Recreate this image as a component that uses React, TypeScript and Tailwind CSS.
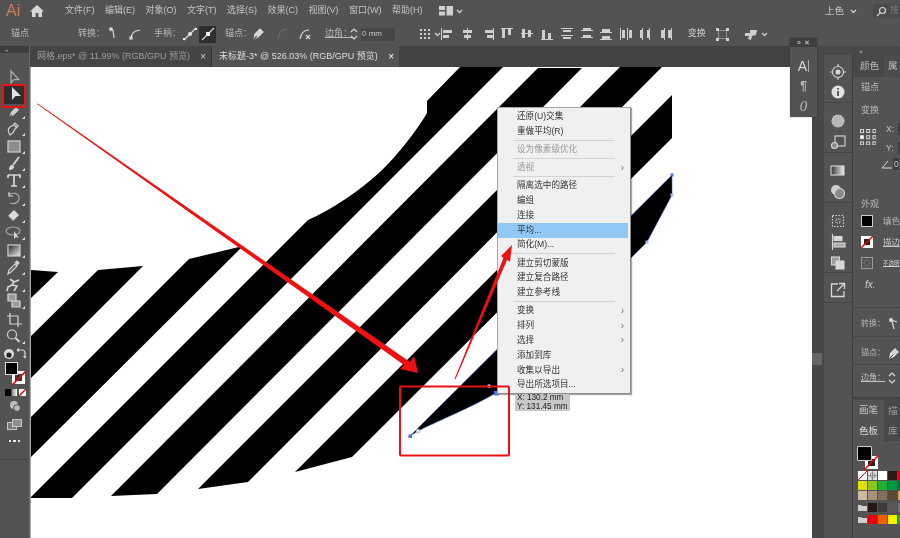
import type { ReactNode } from "react";

const menus = ["文件(F)", "编辑(E)", "对象(O)", "文字(T)", "选择(S)", "效果(C)", "视图(V)", "窗口(W)", "帮助(H)"];

type MenuRow = { label?: string; sub?: boolean; off?: boolean; hot?: boolean; sep?: boolean };

const menuRows: MenuRow[] = [
  { label: "还原(U)交集" },
  { label: "重做平均(R)" },
  { sep: true },
  { label: "设为像素级优化", off: true },
  { sep: true },
  { label: "透视", off: true, sub: true },
  { sep: true },
  { label: "隔离选中的路径" },
  { label: "编组" },
  { label: "连接" },
  { label: "平均...", hot: true },
  { label: "简化(M)..." },
  { sep: true },
  { label: "建立剪切蒙版" },
  { label: "建立复合路径" },
  { label: "建立参考线" },
  { sep: true },
  { label: "变换", sub: true },
  { label: "排列", sub: true },
  { label: "选择", sub: true },
  { label: "添加到库" },
  { label: "收集以导出", sub: true },
  { label: "导出所选项目..." },
];

const swatches = [
  ["none", "reg", "#ffffff", "#2a1a14", "#e60012"],
  ["#e3e000", "#8fc31f", "#22ac38", "#009944", "#006934"],
  ["#cbbc9f", "#a8917b", "#7f6f5c", "#5b4a3a", "#c8a46e"],
  ["folder", "#231815", "#3e3a39", "#595757", "#727171"],
  ["folder", "#e60012", "#eb6100", "#fff100", "#22ac38"],
];

// align icons in the control bar, each a list of x,y,w,h
const alignIcons: number[][][] = [
  [[0, 1, 1, 12], [2, 3, 9, 3], [2, 8, 6, 3]],
  [[6, 1, 1, 12], [2, 3, 9, 3], [3, 8, 7, 3]],
  [[12, 1, 1, 12], [4, 3, 8, 3], [6, 8, 6, 3]],
  [[1, 1, 12, 1], [2, 2, 3, 9], [8, 2, 3, 6]],
  [[1, 6, 12, 1], [2, 2, 3, 9], [8, 3, 3, 7]],
  [[1, 12, 12, 1], [2, 3, 3, 9], [8, 6, 3, 6]],
  [[1, 1, 12, 1], [3, 3, 8, 2], [1, 8, 12, 1], [3, 10, 8, 2]],
  [[1, 3, 12, 1], [3, 1, 8, 2], [1, 10, 12, 1], [3, 8, 8, 2]],
  [[1, 5, 12, 1], [3, 2, 8, 3], [1, 12, 12, 1], [3, 9, 8, 3]],
  [[1, 1, 1, 12], [3, 3, 3, 8], [8, 1, 1, 12], [10, 3, 3, 8]],
  [[3, 1, 1, 12], [1, 3, 2, 8], [10, 1, 1, 12], [8, 3, 2, 8]],
  [[5, 1, 1, 12], [2, 3, 3, 8], [12, 1, 1, 12], [9, 3, 3, 8]],
];

function Tool({ children, corner = true }: { children: ReactNode; corner?: boolean }) {
  return (
    <div className="flex h-[17.3px] w-[30px] shrink-0 items-center justify-center">
      <svg width="24" height="17" viewBox="0 0 24 17" fill="none" stroke="#d6d6d6" strokeWidth="1.2">
        {children}
        {corner && <polygon points="22,13 22,16 19,16" fill="#e0e0e0" stroke="none" />}
      </svg>
    </div>
  );
}

function Tiny({ children, w = 16 }: { children: ReactNode; w?: number }) {
  return (
    <svg width={w} height="16" viewBox={`0 0 ${w} 16`} fill="none" stroke="#d8d8d8" strokeWidth="1.2" className="shrink-0">
      {children}
    </svg>
  );
}

function Chevron() {
  return (
    <svg width="7" height="5" viewBox="0 0 7 5" fill="none" stroke="#cfcfcf" strokeWidth="1.3" className="shrink-0">
      <path d="M1 1l2.5 2.5L6 1" />
    </svg>
  );
}

function MenuBar() {
  return (
    <div className="flex h-[22px] shrink-0 items-center bg-[#535353] text-[#c4c4c4]">
      <span className="ml-[6px] w-[22px] text-[16px] leading-none text-[#cf7d55]">Ai</span>
      <svg width="16" height="14" viewBox="0 0 16 14" fill="#d8d8d8" className="ml-[1px]">
        <path d="M8 1L1 7.5h2V13h3.6V9h2.8v4H13V7.5h2z" />
      </svg>
      <div className="ml-[20px] flex gap-[10.5px] text-[9px]">
        {menus.map((m) => (
          <span key={m} className="whitespace-nowrap">{m}</span>
        ))}
      </div>
      <svg width="14" height="10" viewBox="0 0 14 10" fill="#d0d0d0" className="ml-[16px]">
        <rect x="0" y="0" width="6" height="4" />
        <rect x="0" y="5.5" width="6" height="4" />
        <rect x="7.5" y="0" width="6.5" height="9.5" />
      </svg>
      <span className="ml-[3px]"><Chevron /></span>
      <span className="ml-auto whitespace-nowrap text-[9.5px]">上色</span>
      <span className="ml-[6px]"><Chevron /></span>
      <div className="ml-[16px] flex h-[14px] w-[27px] items-center gap-[3px] bg-[#4b4b4b] pl-[3px]">
        <svg width="11" height="11" viewBox="0 0 11 11" fill="none" stroke="#d4d4d4" strokeWidth="1.2" className="shrink-0">
          <circle cx="6.5" cy="4.5" r="3" />
          <path d="M4.3 6.8L1 10" />
        </svg>
        <span className="text-[9px] whitespace-nowrap text-[#777]">搜</span>
      </div>
    </div>
  );
}

function ControlBar() {
  return (
    <div className="flex h-[24px] shrink-0 items-center whitespace-nowrap bg-[#535353] text-[9px] text-[#b8b8b8]">
      <span className="ml-[11px] w-[67px]">锚点</span>
      <span className="w-[29px]">转换：</span>
      <Tiny>
        <path d="M3 2l3 2 1 8M5 2.5L3 5" />
        <circle cx="4" cy="3" r="1.8" fill="#d8d8d8" stroke="none" />
      </Tiny>
      <span className="w-[4px]" />
      <Tiny>
        <path d="M4 13c0-6 3-8 9-9" />
        <rect x="3" y="11" width="2" height="2" fill="#d8d8d8" />
      </Tiny>
      <span className="ml-[11px] w-[28px]">手柄：</span>
      <Tiny>
        <path d="M2 14L14 2" />
        <circle cx="8" cy="8" r="2" fill="#e8e8e8" stroke="none" />
        <rect x="1" y="12" width="2" height="2" fill="#e8e8e8" stroke="none" />
        <rect x="13" y="2" width="2" height="2" fill="#e8e8e8" stroke="none" />
      </Tiny>
      <span className="ml-[1px] flex h-[17px] w-[17px] items-center justify-center bg-[#2e2e2e]">
        <Tiny>
          <path d="M2 14L14 2" />
          <rect x="6" y="6" width="4" height="4" fill="#f0f0f0" stroke="none" />
        </Tiny>
      </span>
      <span className="ml-[9px] w-[25px]">锚点：</span>
      <Tiny>
        <path d="M4 13l1-5 5-5 3 3-5 5z" fill="#d8d8d8" />
        <path d="M3 14l4-4" stroke="#535353" />
      </Tiny>
      <span className="w-[9px]" />
      <Tiny>
        <path d="M3 13c0-5 3-9 9-10" stroke="#6c6c6c" />
      </Tiny>
      <span className="w-[6px]" />
      <Tiny>
        <path d="M3 13c1-6 4-9 9-9M9 9l4 4M13 9l-4 4" />
      </Tiny>
      <span className="ml-[12px] w-[25px] underline">边角：</span>
      <svg width="8" height="14" viewBox="0 0 8 14" fill="none" stroke="#d8d8d8" strokeWidth="1.2" className="shrink-0">
        <path d="M1 5l3-3 3 3M1 9l3 3 3-3" />
      </svg>
      <div className="ml-[3px] flex h-[13px] w-[34px] items-center bg-[#474747] pl-[1px] text-[8px] text-[#c8c8c8]">0 mm</div>
      <span className="ml-[24px]">
        <svg width="14" height="12" viewBox="0 0 14 12" fill="#d0d0d0">
          {[0, 4, 8].map((y) =>
            [0, 4, 8].map((x) => <rect key={`${x}${y}`} x={x + 1} y={y + 1} width="2" height="2" />)
          )}
        </svg>
      </span>
      <span className="ml-[1px]"><Chevron /></span>
      <div className="flex gap-[5.8px]">
        {alignIcons.map((rects, i) => (
          <svg key={i} width="14" height="14" viewBox="0 0 14 14" fill="#cfcfcf" className="shrink-0">
            {rects.map((r, j) => (
              <rect key={j} x={r[0]} y={r[1]} width={r[2]} height={r[3]} />
            ))}
          </svg>
        ))}
      </div>
      <span className="ml-[15px] w-[28px] text-[#cfcfcf]">变换</span>
      <svg width="13" height="13" viewBox="0 0 13 13" fill="none" stroke="#d0d0d0" strokeWidth="1" className="shrink-0">
        <rect x="2.5" y="2.5" width="8" height="8" strokeDasharray="1 1" />
        <path d="M0 0h3v3H0zM10 0h3v3h-3zM0 10h3v3H0zM10 10h3v3h-3z" fill="#d0d0d0" stroke="none" />
      </svg>
      <span className="ml-[15px]">
        <svg width="14" height="13" viewBox="0 0 14 13" fill="#cfcfcf">
          <path d="M1 5h5V2l7 0-1 5-4 1-1 4-3-1 1-3H1z" />
        </svg>
      </span>
      <span className="ml-[3px]"><Chevron /></span>
    </div>
  );
}

function LeftToolbar() {
  return (
    <div className="flex w-[30px] shrink-0 flex-col items-center border-r border-[#6a6a6a] bg-[#535353]">
      <div className="flex h-[7px] w-full items-center bg-[#3d3d3d] pl-[5px] text-[6px] leading-none text-[#aaa]">»</div>
      <div className="h-[15.4px] w-full shrink-0" />
      <Tool corner={false}>
        <path d="M8 2v12l3-3.4h5z" stroke="#b0b0b0" />
      </Tool>
      <div className="flex h-[17.3px] w-[30px] shrink-0 items-center justify-center">
        <div className="flex h-[19px] w-[22px] items-center justify-center bg-[#2f2f2f]">
          <svg width="16" height="16" viewBox="0 0 16 16" fill="#e4e4e4">
            <path d="M5 1v13l3.5-4H14z" />
          </svg>
        </div>
      </div>
      <Tool>
        <path d="M6 15l2-6 5-5 3 3-5 5z" fill="#cfcfcf" stroke="none" />
        <path d="M6 15l3-3" stroke="#535353" />
      </Tool>
      <Tool>
        <path d="M7 15c-3-4-2-8 2-9l3-3 3 3-3 3c-1 3-3 5-5 6z" />
        <path d="M11 5l3 3" />
      </Tool>
      <Tool>
        <rect x="5" y="3" width="12" height="11" fill="#8c8c8c" stroke="#cfcfcf" />
      </Tool>
      <Tool>
        <path d="M16 2l-6 8" strokeWidth="1.8" />
        <path d="M6 15c0-3 1-5 3-5l2 1c0 3-2 4-5 4z" fill="#d6d6d6" stroke="none" />
      </Tool>
      <Tool>
        <path d="M5 3h12v3M5 3v3M11 3v11M8 14h6" strokeWidth="1.7" />
      </Tool>
      <Tool>
        <path d="M6 5c3-3 9-2 10 2 1 5-5 8-9 6" stroke="#a6a6a6" />
        <path d="M6 2v4h4" stroke="#d6d6d6" />
      </Tool>
      <Tool>
        <path d="M5 9l6-6 5 5-6 6z" fill="#dcdcdc" stroke="none" />
        <path d="M5 9l5 5" stroke="#777" />
      </Tool>
      <Tool>
        <ellipse cx="10" cy="7" rx="7" ry="4" stroke="#a8a8a8" />
        <path d="M11 7v8l2-2 3 1z" fill="#d6d6d6" stroke="none" />
      </Tool>
      <Tool>
        <defs>
          <linearGradient id="tool-grad" x1="0" x2="1" y1="0" y2="1">
            <stop offset="0" stopColor="#222" />
            <stop offset="1" stopColor="#eee" />
          </linearGradient>
        </defs>
        <rect x="5" y="3" width="12" height="11" fill="url(#tool-grad)" stroke="#cfcfcf" />
      </Tool>
      <Tool>
        <path d="M5 15l1-4 6-6 2 2-6 6z" />
        <path d="M12 4l2-2 2 2-2 2" fill="#d6d6d6" />
      </Tool>
      <Tool>
        <path d="M7 3l4 3-2 3 5 1-3 5M9 9l-4 2-1 4M11 6l5-2" strokeWidth="1.6" />
      </Tool>
      <Tool>
        <path d="M5 1h8v7H5zM9 8h8v6H9z" fill="#9a9a9a" />
      </Tool>
      <Tool corner={false}>
        <path d="M7 2v11h12M4 5h11v11" />
      </Tool>
      <Tool>
        <circle cx="9" cy="6.5" r="4.5" />
        <path d="M12.5 10l4 4" strokeWidth="1.8" />
      </Tool>
      <div className="flex h-[17px] w-full shrink-0 items-center justify-between px-[3px]">
        <svg width="12" height="12" viewBox="0 0 12 12">
          <circle cx="6" cy="6" r="5" fill="#dcdcdc" />
          <circle cx="6" cy="7" r="2.6" fill="#222" />
        </svg>
        <svg width="10" height="12" viewBox="0 0 10 12" fill="none" stroke="#d6d6d6" strokeWidth="1.2">
          <path d="M1 2h5c2 0 3 1 3 3v5M1 2l2-1.5M1 2l2 1.5M9 10l-1.5-2M9 10l1-2" />
        </svg>
      </div>
      <div className="relative h-[23px] w-full shrink-0">
        <div className="absolute left-[12px] top-[9px] h-[13px] w-[13px] border-2 border-white bg-white">
          <div className="mx-auto mt-[1px] h-[7px] w-[7px] bg-[#3a3a3a]" />
        </div>
        <div className="absolute left-[5px] top-0 h-[13px] w-[13px] border border-[#ddd] bg-black" />
        <svg className="absolute left-[11px] top-[9px]" width="15" height="14" viewBox="0 0 15 14">
          <path d="M1 14L15 0" stroke="#ee0000" strokeWidth="1.6" />
        </svg>
      </div>
      <div className="mt-[3px] flex h-[8px] w-full items-center gap-[1px] pl-[5px]">
        <span className="h-[7px] w-[6px] bg-black" />
        <span className="h-[7px] w-[5px] bg-gradient-to-r from-[#888] to-white" />
        <svg width="7" height="7" viewBox="0 0 7 7" className="ml-[1px] bg-white">
          <path d="M0 7L7 0" stroke="#ee0000" strokeWidth="1.4" />
        </svg>
      </div>
      <div className="mt-[3px] flex h-[14px] items-center">
        <svg width="12" height="12" viewBox="0 0 12 12" fill="#bdbdbd">
          <circle cx="5" cy="5" r="4" />
          <circle cx="8" cy="8" r="3.4" stroke="#535353" />
        </svg>
      </div>
      <div className="mt-[4px] flex h-[14px] items-center">
        <svg width="15" height="11" viewBox="0 0 15 11" fill="none" stroke="#c8c8c8">
          <rect x="0.5" y="3.5" width="9" height="7" fill="#7a7a7a" />
          <rect x="5.5" y="0.5" width="9" height="7" fill="#8f8f8f" />
        </svg>
      </div>
      <div className="mt-[3px] flex h-[14px] items-center gap-[2px]">
        <span className="h-[2.5px] w-[2.5px] bg-[#e8e8e8]" />
        <span className="h-[2.5px] w-[2.5px] bg-[#e8e8e8]" />
        <span className="h-[2.5px] w-[2.5px] bg-[#e8e8e8]" />
      </div>
      <div className="mt-[11px] w-full border-t border-[#444]" />
    </div>
  );
}

function TabBar() {
  return (
    <div className="flex h-[21px] shrink-0 items-stretch bg-[#424242] text-[9px] whitespace-nowrap">
      <div className="flex w-[182px] items-center justify-between border-r border-[#383838] bg-[#454545] pl-[7px] pr-[5px] text-[#9c9c9c]">
        <span>网格.eps* @ 11.99% (RGB/GPU 预览)</span>
        <span className="text-[10px] text-[#cfcfcf]">×</span>
      </div>
      <div className="flex w-[187px] items-center justify-between bg-[#535353] pl-[7px] pr-[5px] text-[#dedede]">
        <span>未标题-3* @ 526.03% (RGB/GPU 预览)</span>
        <span className="text-[10px] text-white">×</span>
      </div>
    </div>
  );
}

function ContextMenu() {
  return (
    <div className="absolute left-[466px] top-[40px] flex w-[134px] flex-col border border-[#a8a8a8] border-r-[#8c8c8c] border-b-[#8c8c8c] bg-[#f0f0f0] py-[1px] text-[8.6px] text-[#333] shadow-[1px_1px_1px_rgba(0,0,0,0.35)]">
      {menuRows.map((r, i) =>
        r.sep ? (
          <div key={i} className="mx-[15px] my-[1.2px] border-t border-[#d4d4d4]" />
        ) : (
          <div
            key={i}
            className={`flex h-[14.8px] items-center justify-between pl-[19px] pr-[3px] ${r.hot ? "mr-[2px] bg-[#90c8f6]" : ""} ${r.off ? "text-[#9a9a9a]" : ""}`}
          >
            <span>{r.label}</span>
            {r.sub && <span className="mr-[3px] text-[10px] leading-none text-[#777]">›</span>}
          </div>
        )
      )}
    </div>
  );
}

function Artboard() {
  return (
    <div className="relative min-h-0 flex-1 overflow-hidden border-l border-[#a8a8a8] bg-white">
      <svg className="absolute left-0 top-0" width="781" height="471" viewBox="31 67 781 471">
        <g fill="#000">
          <path d="M460 67H503L72 498H30L308 220C335 208 360 190 380 172C398 155 417 130 427 113V101Z" />
          <polygon points="538,68 582,68 157,494 111,496" />
          <polygon points="620,67 662,67 248,482 198,489" />
          <polygon points="672,95 672,138 352,457 295,472" />
          <polygon points="243,246 30,458 30,418 189,259" />
          <polygon points="143,266 30,379 30,337 98,270" />
          <polygon points="30,270 58,272 30,299" />
          <path d="M672 175V195L647 242 632 257 496 393C470 408 440 420 418 431L410 436Z" stroke="#3a5fc8" strokeWidth="0.6" />
        </g>
        <g fill="#4a74e8">
          <rect x="670.5" y="173.5" width="3" height="3" />
          <rect x="670.5" y="193.5" width="3" height="3" fill="#9db6ee" />
          <rect x="645.5" y="240.5" width="3" height="3" fill="#9db6ee" />
          <rect x="494" y="391" width="4.5" height="4.5" />
          <rect x="408.5" y="434.5" width="3.5" height="3.5" />
        </g>
        <circle cx="489" cy="386" r="1.6" fill="#fff" stroke="#8aa4e8" strokeWidth="0.6" />
        <circle cx="418" cy="431" r="2" fill="#d8e4f8" stroke="#8aa4a8" strokeWidth="0.6" />
      </svg>
      <ContextMenu />
      <div className="absolute left-[484px] top-[327px] rounded-[1px] bg-[#c8c8c8] px-[2px] text-[8.2px] leading-[8.5px] text-[#222] whitespace-nowrap">
        <div>X: 130.2 mm</div>
        <div>Y: 131.45 mm</div>
      </div>
      <svg className="absolute left-0 top-0" width="781" height="471" viewBox="31 67 781 471" fill="#f01010">
        <polygon points="37,104 37.6,103.4 410,362 414,356 418,373 400,369 404,365" />
        <polygon points="454.5,379 455.5,379.3 507,260 510,261.5 512,245 501,256 503.5,258" />
        <rect x="400" y="386.5" width="109" height="69" rx="1" fill="none" stroke="#ee1111" strokeWidth="2" />
      </svg>
    </div>
  );
}

function DockIcon({ children, h = 20 }: { children: ReactNode; h?: number }) {
  return (
    <div className="flex w-full shrink-0 items-center justify-center" style={{ height: h }}>
      <svg width="16" height="16" viewBox="0 0 16 16" fill="none" stroke="#d8d8d8" strokeWidth="1.1">
        {children}
      </svg>
    </div>
  );
}

function IconColumn() {
  return (
    <div className="flex w-[29px] shrink-0 flex-col border-r border-[#3f3f3f] bg-[#535353]">
      <div className="flex h-[48px] shrink-0 flex-col border-b border-[#444] pt-[7px]">
        <DockIcon>
          <circle cx="8" cy="8" r="5.5" />
          <circle cx="8" cy="8" r="2" fill="#d8d8d8" />
          <path d="M8 0v3M8 13v3M0 8h3M13 8h3" />
        </DockIcon>
        <DockIcon>
          <circle cx="8" cy="8" r="6.5" fill="#e2e2e2" stroke="none" />
          <path d="M8 4v1.5M8 7v5" stroke="#333" strokeWidth="1.5" />
        </DockIcon>
      </div>
      <div className="flex h-[50px] shrink-0 flex-col gap-[1px] border-b border-[#444] pt-[8px]">
        <DockIcon>
          <circle cx="8" cy="8" r="6" fill="#b8b8b8" strokeDasharray="1.5 1" />
        </DockIcon>
        <DockIcon>
          <rect x="5" y="2" width="10" height="10" />
          <circle cx="4.5" cy="11.5" r="3" fill="#8a8a8a" />
        </DockIcon>
      </div>
      <div className="flex h-[50px] shrink-0 flex-col gap-[1px] border-b border-[#444] pt-[8px]">
        <DockIcon>
          <defs>
            <linearGradient id="dock-grad" x1="0" x2="1">
              <stop offset="0" stopColor="#333" />
              <stop offset="1" stopColor="#eee" />
            </linearGradient>
          </defs>
          <rect x="1" y="3" width="13" height="9" fill="url(#dock-grad)" />
        </DockIcon>
        <DockIcon>
          <circle cx="6" cy="6" r="5" fill="#cfcfcf" stroke="none" />
          <circle cx="9.5" cy="9.5" r="5" fill="#8a8a8a" />
        </DockIcon>
      </div>
      <div className="flex h-[70px] shrink-0 flex-col gap-[1px] border-b border-[#444] pt-[8px]">
        <DockIcon>
          <rect x="2.5" y="2.5" width="11" height="11" strokeDasharray="1.5 1.5" />
          <rect x="6" y="6" width="4" height="4" strokeDasharray="1 1" />
        </DockIcon>
        <DockIcon>
          <path d="M2.5 0v16" />
          <rect x="4" y="2.5" width="8" height="4" fill="#d8d8d8" />
          <rect x="4" y="9" width="11" height="4" fill="#a8a8a8" />
        </DockIcon>
        <DockIcon>
          <rect x="1.5" y="2" width="8" height="8" fill="#9a9a9a" />
          <rect x="6" y="6" width="8" height="8" fill="#d8d8d8" />
        </DockIcon>
      </div>
      <div className="flex h-[30px] shrink-0 border-b border-[#444] pt-[7px]">
        <DockIcon>
          <path d="M8 2H1.5v12.5H14V9" strokeWidth="1.3" />
          <path d="M7 9l7-7M9 1.5h5.5V7" strokeWidth="1.3" />
        </DockIcon>
      </div>
    </div>
  );
}

function PanelLabel({ children, className = "" }: { children: ReactNode; className?: string }) {
  return <div className={`flex shrink-0 items-center whitespace-nowrap pl-[8px] text-[9px] text-[#b8b8b8] ${className}`}>{children}</div>;
}

function PropertiesPanel() {
  return (
    <div className="flex w-[47px] shrink-0 flex-col bg-[#535353]">
      <div className="flex h-[22px] shrink-0 text-[9.5px] text-[#bdbdbd] whitespace-nowrap">
        <div className="flex w-[30px] items-center justify-center bg-[#484848] pl-[3px]">颜色</div>
        <div className="flex flex-1 items-center border-l border-[#454545] bg-[#4c4c4c] pl-[4px]">属</div>
      </div>
      <PanelLabel className="h-[20px] pt-[2px]">锚点</PanelLabel>
      <PanelLabel className="mt-[3px] h-[20px] pt-[2px]">变换</PanelLabel>
      <div className="flex h-[36px] shrink-0 items-center pl-[7px]">
        <svg width="16" height="16" viewBox="0 0 16 16" fill="#d8d8d8" className="mb-[3px] shrink-0">
          {[0, 1, 2].map((r) =>
            [0, 1, 2].map((c) => (
              <rect
                key={`${r}${c}`}
                x={c * 6.2 + 0.5}
                y={r * 6.2 + 0.5}
                width="3"
                height="3"
                fill={r === 1 && c === 0 ? "#fff" : "none"}
                stroke="#d8d8d8"
              />
            ))
          )}
        </svg>
        <div className="ml-[10px] flex flex-col gap-[7px] text-[8.5px] leading-[12px] text-[#c4c4c4]">
          <span className="flex items-center whitespace-nowrap">X:<i className="ml-[4px] h-[12px] w-[6px] bg-[#3d3d3d]" /></span>
          <span className="flex items-center whitespace-nowrap">Y:<i className="ml-[4px] h-[12px] w-[6px] bg-[#3d3d3d]" /></span>
        </div>
      </div>
      <div className="flex h-[16px] shrink-0 items-center justify-end gap-[1px] pr-[1px] text-[8.5px] text-[#c4c4c4]">
        <svg width="11" height="9" viewBox="0 0 11 9" fill="none" stroke="#d8d8d8">
          <path d="M1 8h10M1 8l6-7" />
        </svg>
        <span className="w-[6px] bg-[#3d3d3d] pl-[1px] leading-[12px]">0</span>
      </div>
      <PanelLabel className="mt-[24px] h-[16px] pt-[1px]">外观</PanelLabel>
      <div className="flex h-[18px] shrink-0 items-center gap-[10px] pl-[8px] text-[8.5px] text-[#b8b8b8] whitespace-nowrap">
        <span className="h-[12px] w-[12px] shrink-0 border border-[#cfcfcf] bg-black" />
        填色
      </div>
      <div className="mt-[3px] flex h-[18px] shrink-0 items-center gap-[10px] pl-[8px] text-[8.5px] text-[#c8c8c8] whitespace-nowrap">
        <svg width="12" height="12" viewBox="0 0 12 12" className="shrink-0 bg-white">
          <rect x="3" y="3" width="6" height="6" fill="#222" />
          <path d="M0 12L12 0" stroke="#ee0000" strokeWidth="1.5" />
        </svg>
        <span className="underline">描边</span>
      </div>
      <div className="mt-[3px] flex h-[18px] shrink-0 items-center gap-[10px] pl-[8px] text-[5.5px] text-[#d4d4d4] whitespace-nowrap">
        <svg width="12" height="12" viewBox="0 0 12 12" fill="none" stroke="#9a9a9a" className="shrink-0">
          <rect x="0.5" y="0.5" width="11" height="11" />
          <circle cx="6" cy="6" r="3" strokeDasharray="1 1" />
        </svg>
        <span className="underline">不透明</span>
      </div>
      <PanelLabel className="mt-[3px] h-[18px] italic">
        <span className="pl-[4px] text-[10px] text-[#cfcfcf]">fx.</span>
      </PanelLabel>
      <div className="mt-[14px] shrink-0 border-t border-[#474747]" />
      <div className="flex h-[29px] shrink-0 items-center gap-[3px] border-b border-[#474747] pl-[8px] pt-[4px] text-[8px] text-[#b8b8b8] whitespace-nowrap">
        转换：
        <svg width="12" height="14" viewBox="0 0 12 14" fill="none" stroke="#d8d8d8" strokeWidth="1.2" className="shrink-0">
          <circle cx="3" cy="3" r="2" fill="#d8d8d8" stroke="none" />
          <path d="M3 3l6 2M4 4l2 8" />
        </svg>
      </div>
      <div className="flex h-[28px] shrink-0 items-center gap-[3px] border-b border-[#474747] pl-[8px] pt-[4px] text-[8px] text-[#b8b8b8] whitespace-nowrap">
        锚点：
        <svg width="12" height="14" viewBox="0 0 12 14" fill="#d8d8d8" className="shrink-0">
          <path d="M1 13l1-6 5-5 4 4-5 5z" />
          <path d="M1 13l4-4" stroke="#535353" />
        </svg>
      </div>
      <div className="flex h-[32px] shrink-0 items-center gap-[3px] pb-[6px] pl-[8px] text-[8px] text-[#c4c4c4] whitespace-nowrap">
        <span className="underline">边角：</span>
        <svg width="8" height="14" viewBox="0 0 8 14" fill="none" stroke="#d8d8d8" strokeWidth="1.2" className="shrink-0">
          <path d="M1 5l3-3 3 3M1 9l3 3 3-3" />
        </svg>
      </div>
      <div className="shrink-0 border-t border-[#3d3d3d]" />
      <div className="flex h-[21px] shrink-0 bg-[#484848] pt-[2px] text-[9.5px] text-[#c8c8c8]">
        <div className="flex w-[31px] items-center justify-center bg-[#535353] pt-[1px]">画笔</div>
        <div className="pl-[4px] leading-[21px] text-[#9a9a9a]">描</div>
      </div>
      <div className="flex h-[22px] shrink-0 bg-[#484848] text-[9.5px] text-[#dcdcdc]">
        <div className="flex w-[31px] items-center justify-center bg-[#535353] pt-[2px]">色板</div>
        <div className="pl-[4px] leading-[24px] text-[#9a9a9a]">库</div>
      </div>
      <div className="relative h-[30px] shrink-0">
        <div className="absolute left-[12px] top-[15px] flex h-[13px] w-[13px] items-center justify-center bg-white">
          <div className="h-[7px] w-[7px] bg-[#222]" />
        </div>
        <div className="absolute left-[4px] top-[5px] h-[15px] w-[15px] rounded-[1px] border border-[#cfcfcf] bg-black" />
        <svg className="absolute left-[11px] top-[14px]" width="15" height="15" viewBox="0 0 15 15">
          <path d="M0 15L15 0" stroke="#ee0000" strokeWidth="1.5" />
        </svg>
      </div>
      <div className="flex flex-col pl-[5px]">
        {swatches.map((row, i) => (
          <div key={i} className={`flex h-[10px] shrink-0 gap-[1px] ${i === 3 ? "mt-[1.5px]" : i === 4 ? "mt-[2px]" : "mb-[0px]"}`}>
            {row.map((c, j) => (
              <Swatch key={j} color={c} />
            ))}
          </div>
        ))}
      </div>
    </div>
  );
}

function Swatch({ color }: { color: string }) {
  if (color === "none") {
    return (
      <svg width="9" height="9" viewBox="0 0 9 9" className="shrink-0 bg-white">
        <path d="M0 9L9 0" stroke="#ee0000" strokeWidth="1" />
      </svg>
    );
  }
  if (color === "reg") {
    return (
      <svg width="9" height="9" viewBox="0 0 9 9" fill="none" stroke="#777" strokeWidth="0.7" className="shrink-0 bg-[#ddd]">
        <circle cx="4.5" cy="4.5" r="2.5" />
        <path d="M4.5 0v9M0 4.5h9" />
      </svg>
    );
  }
  if (color === "folder") {
    return (
      <svg width="9" height="9" viewBox="0 0 9 9" fill="#cfcfcf" className="shrink-0">
        <path d="M0 2h3l1 1h5v5H0z" />
      </svg>
    );
  }
  return <span className="h-[9px] w-[9px] shrink-0" style={{ background: color }} />;
}

function RightDock() {
  return (
    <div className="flex w-[88px] shrink-0 flex-col">
      <div className="flex h-[9px] shrink-0 items-center justify-center bg-[#484848] pl-[10px] text-[6px] leading-none text-[#bbb]">«</div>
      <div className="flex min-h-0 flex-1">
        <div className="flex w-[12px] shrink-0 flex-col justify-end bg-[#474747]">
          <div className="mb-[173px] h-[12px] w-[10px] bg-[#666]" />
        </div>
        <IconColumn />
        <PropertiesPanel />
      </div>
    </div>
  );
}

function FloatingType() {
  return (
    <div className="absolute left-[790px] top-[38px] flex h-[79px] w-[27px] flex-col items-center bg-[#535353] text-[#d8d8d8] shadow-[0_0_1px_rgba(0,0,0,0.5)]">
      <div className="flex h-[9px] w-full items-center justify-between bg-[#3f3f3f] px-[7px] text-[7px] leading-none">
        <span>»</span>
        <span>✕</span>
      </div>
      <span className="mt-[9px] flex h-[20px] items-center text-[14px] leading-none">A<i className="ml-[1px] h-[12px] w-px bg-[#aaa]" /></span>
      <span className="flex h-[20px] items-center text-[12px] font-bold leading-none text-[#bbb]">¶</span>
      <span className="flex h-[20px] items-center font-['Liberation_Serif',serif] text-[15px] italic leading-none text-[#bbb]">0</span>
    </div>
  );
}

export default function App() {
  return (
    <div className="relative flex h-[538px] w-[900px] flex-col overflow-hidden bg-[#535353] font-['Liberation_Sans','Noto_Sans_CJK_SC',sans-serif] blur-[0.35px]">
      <MenuBar />
      <ControlBar />
      <div className="flex min-h-0 flex-1">
        <LeftToolbar />
        <div className="flex min-w-0 flex-1 flex-col">
          <TabBar />
          <Artboard />
        </div>
        <RightDock />
      </div>
      <FloatingType />
      {/* red box the tutorial drew around the selection tool */}
      <div className="absolute left-[1px] top-[84px] h-[24px] w-[25px] rounded-[1px] border-2 border-[#ee1111]" />
    </div>
  );
}
